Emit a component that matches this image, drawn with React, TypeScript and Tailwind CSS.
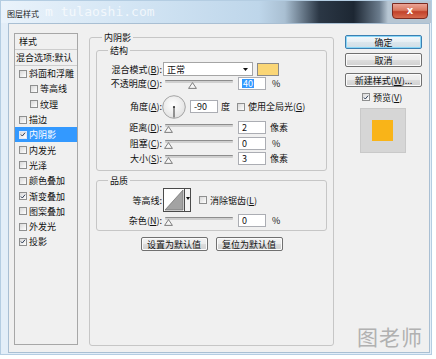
import clsx from "clsx";

const font = "font-['Noto_Sans_CJK_SC','Noto_Sans',sans-serif]";
const btn =
  "flex items-center justify-center rounded-[2px] border border-[#707070] bg-[linear-gradient(#f3f3f3_0%,#ebebeb_50%,#dddddd_51%,#d0d0d0_100%)] shadow-[inset_0_0_0_1px_#fbfbfb] leading-none";

function Check({ checked, dark }: { checked?: boolean; dark?: boolean }) {
  return (
    <span
      className={clsx(
        "inline-flex h-[8px] w-[8px] shrink-0 items-center justify-center border bg-[linear-gradient(135deg,#d8d8d8,#ffffff)]",
        dark ? "border-[#dfe9f7]" : "border-[#8e8f8f]"
      )}
    >
      {checked && (
        <svg viewBox="0 0 8 8" className="h-[7px] w-[7px]">
          <path d="M1.2 4 L3.1 6 L6.8 1.5" fill="none" stroke="#2a3a55" strokeWidth="1.3" />
        </svg>
      )}
    </span>
  );
}

function Acc({ text, k, colon = true }: { text: string; k: string; colon?: boolean }) {
  return (
    <>
      {text}(<span className="underline underline-offset-1">{k}</span>){colon ? ":" : ""}
    </>
  );
}

function Slider({ pos }: { pos: number }) {
  return (
    <div className="relative ml-[2px] h-[13px] w-[68px] shrink-0">
      <div className="absolute left-0 right-0 top-[3px] h-[3px] rounded-[1px] border-t border-[#8d8d8d] bg-[#cfcfcf]" />
      <svg className="absolute top-[5px]" style={{ left: pos - 4 }} width="9" height="7" viewBox="0 0 9 7">
        <path d="M4.5 0.6 L8.4 6.4 L0.6 6.4 Z" fill="#f6f6f6" stroke="#6f6f6f" strokeWidth="0.9" />
      </svg>
    </div>
  );
}

function Field({ value, selected, ml = 5 }: { value: string; selected?: boolean; ml?: number }) {
  return (
    <div
      className={clsx(
        "flex h-[13px] w-[28px] shrink-0 items-center border border-[#abadb3] bg-white pl-[3px] text-[9px] leading-none",
        ml === 5 ? "ml-[5px]" : "ml-[4px]"
      )}
    >
      {selected ? <span className="bg-[#3399ff] px-[1px] text-white">{value}</span> : value}
    </div>
  );
}

function Label({ children }: { children: React.ReactNode }) {
  return <div className="w-[66px] shrink-0 whitespace-nowrap pr-[1px] text-right leading-none">{children}</div>;
}

const styles: { name: string; checked?: boolean; indent?: boolean; active?: boolean }[] = [
  { name: "斜面和浮雕" },
  { name: "等高线", indent: true },
  { name: "纹理", indent: true },
  { name: "描边" },
  { name: "内阴影", checked: true, active: true },
  { name: "内发光" },
  { name: "光泽" },
  { name: "颜色叠加" },
  { name: "渐变叠加", checked: true },
  { name: "图案叠加" },
  { name: "外发光" },
  { name: "投影", checked: true },
];

export default function App() {
  return (
    <div className={clsx("h-[359px] w-[436px] overflow-hidden bg-white text-[9px] text-[#111]", font)}>
      <div className="h-[355px] w-[432px] border border-[#b4cde2] bg-[#e3eef8]">
        {/* title bar */}
        <div className="relative flex h-[22px] items-start bg-[linear-gradient(90deg,#eaf3fb_0%,#d3e5f4_30%,#bed6ea_60%,#a9bfd2_66%,#2b3745_74%,#1d2733_82%,#6b7c8d_88%,#b7c6d3_90%)]">
          <span className="ml-[6px] mt-[9px] text-[8px] leading-none text-[#1a1a1a]">图层样式</span>
          <span className="absolute left-[44px] top-[4px] font-['DejaVu_Sans_Mono',monospace] text-[13px] leading-none text-white/70">
            m tulaoshi.com
          </span>
          <div className="ml-auto mr-[3px] mt-[2px] flex h-[16px] w-[36px] items-center justify-center rounded-b-[4px] border border-[#7b2a20] bg-[linear-gradient(#eba597_0%,#d9785f_45%,#c2412a_55%,#d66a4e_100%)] font-['DejaVu_Sans',sans-serif] text-[10px] font-bold leading-none text-white">
            x
          </div>
        </div>

        {/* client area */}
        <div className="relative ml-[7px] flex h-[330px] w-[422px] items-start border border-[#a9bfd3] bg-[#f0f0f0]">
          {/* style list */}
          <div className="ml-[5px] mt-[9px] h-[312px] w-[64px] shrink-0 border border-[#a7a7a7]">
            <div className="flex h-[16px] items-center border-b border-[#cdcdcd] pl-[4px] leading-none">样式</div>
            <div className="flex h-[16px] items-center border-b border-[#cdcdcd] pl-[1px] leading-none whitespace-nowrap">
              混合选项:默认
            </div>
            {styles.map((s) => (
              <div
                key={s.name}
                className={clsx(
                  "flex h-[15.3px] items-center gap-[2px] leading-none",
                  s.indent ? "pl-[15px]" : "pl-[4px]",
                  s.active && "bg-[#3399ff] text-white"
                )}
              >
                <Check checked={s.checked} dark={s.active} />
                <span>{s.name}</span>
              </div>
            ))}
          </div>

          {/* inner shadow group */}
          <fieldset className="ml-[11px] mt-[7px] h-[315px] w-[245px] shrink-0 rounded-[3px] border border-[#c6c6c6] px-[6px]">
            <legend className="ml-[6px] px-[2px] leading-[13px]">内阴影</legend>

            <fieldset className="w-[231px] rounded-[3px] border border-[#c6c6c6] pb-[5px]">
              <legend className="ml-[11px] px-[2px] leading-[13px]">结构</legend>

              <div className="mt-[5px] flex h-[14px] items-center">
                <Label>
                  <Acc text="混合模式" k="B" />
                </Label>
                <div className="relative flex h-[14px] w-[90px] shrink-0 items-center border border-[#a5a5a5] bg-white pl-[3px] leading-none">
                  正常
                  <svg className="absolute right-[4px] top-[5px]" width="5" height="3" viewBox="0 0 5 3">
                    <path d="M0 0 H5 L2.5 3 Z" fill="#111" />
                  </svg>
                </div>
                <div className="ml-[4px] h-[13px] w-[22px] shrink-0 border border-[#8a8a8a] bg-[#fad676]" />
              </div>

              <div className="mt-[1px] flex h-[13px] items-center">
                <Label>
                  <Acc text="不透明度" k="O" />
                </Label>
                <Slider pos={27} />
                <Field value="40" selected />
                <span className="ml-[6px] leading-none">%</span>
              </div>

              <div className="mt-[5px] flex h-[23px] items-center">
                <Label>
                  <Acc text="角度" k="A" />
                </Label>
                <svg width="24" height="24" viewBox="0 0 24 24" className="-ml-[1px] shrink-0">
                  <defs>
                    <radialGradient id="dial" cx="45%" cy="40%" r="60%">
                      <stop offset="0%" stopColor="#ffffff" />
                      <stop offset="100%" stopColor="#e2e2e2" />
                    </radialGradient>
                  </defs>
                  <circle cx="12" cy="12" r="11.3" fill="url(#dial)" stroke="#9c9c9c" strokeWidth="0.9" />
                  <line x1="12" y1="12" x2="12" y2="22.5" stroke="#333" strokeWidth="1" />
                  <circle cx="12" cy="12" r="1.1" fill="#333" />
                </svg>
                <Field value="-90" ml={4} />
                <span className="ml-[3px] leading-none">度</span>
                <span className="ml-[7px] flex items-center gap-[3px] leading-none">
                  <Check />
                  <span>
                    使用全局光(<span className="underline underline-offset-1">G</span>)
                  </span>
                </span>
              </div>

              <div className="mt-[3px] flex h-[13px] items-center">
                <Label>
                  <Acc text="距离" k="D" />
                </Label>
                <Slider pos={3} />
                <Field value="2" />
                <span className="ml-[4px] leading-none">像素</span>
              </div>

              <div className="mt-[3px] flex h-[13px] items-center">
                <Label>
                  <Acc text="阻塞" k="C" />
                </Label>
                <Slider pos={3} />
                <Field value="0" />
                <span className="ml-[6px] leading-none">%</span>
              </div>

              <div className="mt-[2px] flex h-[13px] items-center">
                <Label>
                  <Acc text="大小" k="S" />
                </Label>
                <Slider pos={3} />
                <Field value="3" />
                <span className="ml-[4px] leading-none">像素</span>
              </div>
            </fieldset>

            <fieldset className="mt-[3px] w-[231px] rounded-[3px] border border-[#c6c6c6] pb-[3px]">
              <legend className="ml-[11px] px-[2px] leading-[13px]">品质</legend>

              <div className="mt-[1px] flex h-[24px] items-center">
                <Label>等高线:</Label>
                <div className="flex h-[24px] w-[28px] shrink-0 border border-[#4a4a4a] bg-white">
                  <svg width="20" height="22" viewBox="0 0 20 22" className="shrink-0">
                    <path d="M1 21 L19 1 L19 21 Z" fill="#a3a3a3" stroke="#6a6a6a" strokeWidth="0.7" />
                  </svg>
                  <div className="relative flex-1 border-l border-[#4a4a4a] bg-[#f4f4f4]">
                    <svg className="absolute left-[1px] top-[8px]" width="4" height="3" viewBox="0 0 4 3">
                      <path d="M0 0 H4 L2 3 Z" fill="#111" />
                    </svg>
                  </div>
                </div>
                <span className="ml-[8px] flex items-center gap-[3px] leading-none">
                  <Check />
                  <span>
                    消除锯齿(<span className="underline underline-offset-1">L</span>)
                  </span>
                </span>
              </div>

              <div className="mt-[2px] flex h-[13px] items-center">
                <Label>
                  <Acc text="杂色" k="N" />
                </Label>
                <Slider pos={3} />
                <Field value="0" />
                <span className="ml-[6px] leading-none">%</span>
              </div>
            </fieldset>

            <div className="mt-[6px] flex justify-center gap-[8px]">
              <div className={clsx(btn, "h-[14px] w-[67px]")}>设置为默认值</div>
              <div className={clsx(btn, "h-[14px] w-[67px]")}>复位为默认值</div>
            </div>
          </fieldset>

          {/* right column */}
          <div className="ml-[11px] mt-[11px] flex w-[77px] shrink-0 flex-col">
            <div className="flex h-[14px] items-center justify-center rounded-[2px] border border-[#3c7fb1] bg-[linear-gradient(#f4f9fc_0%,#e6eef3_50%,#dbe6ed_51%,#d0dde6_100%)] leading-none shadow-[inset_0_0_0_1px_#8ad7f7]">
              确定
            </div>
            <div className={clsx(btn, "mt-[4px] h-[14px]")}>取消</div>
            <div className={clsx(btn, "mt-[6px] h-[14px] whitespace-nowrap")}>
              新建样式(<span className="underline underline-offset-1">W</span>)...
            </div>
            <div className="ml-[17px] mt-[5px] flex h-[10px] items-center gap-[3px] leading-none">
              <Check checked />
              <span>
                预览(<span className="underline underline-offset-1">V</span>)
              </span>
            </div>
            <div className="ml-[15px] mt-[6px] flex h-[45px] w-[46px] items-start border border-[#c9c9c9] bg-[#d6d6d6] pl-[11px] pt-[11px]">
              <div className="h-[21px] w-[21px] bg-[#f9b418]" />
            </div>
          </div>

          {/* watermark */}
          <span className="absolute bottom-[5px] right-[6px] text-[21px] leading-none tracking-[1px] text-[#b1b1b1]">
            图老师
          </span>
        </div>
      </div>
    </div>
  );
}
